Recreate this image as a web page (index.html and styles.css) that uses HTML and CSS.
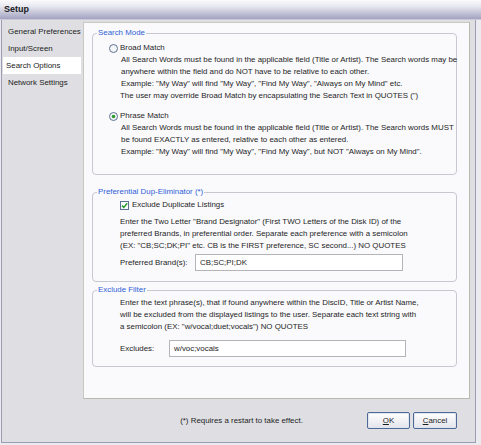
FILE: index.html
```html
<!DOCTYPE html>
<html>
<head>
<meta charset="utf-8">
<title>Setup</title>
<link rel="stylesheet" href="styles.css">
</head>
<body>
<div class="window">
  <div class="titlebar">Setup</div>
  <div class="main">
    <ul class="nav">
      <li>General Preferences</li>
      <li>Input/Screen</li>
      <li class="sel">Search Options</li>
      <li>Network Settings</li>
    </ul>
    <div class="panel">
      <fieldset class="grp g1">
        <legend>Search Mode</legend>
        <div class="body">
          <div class="opt">
            <svg class="radio" width="9" height="9" viewBox="0 0 9 9"><circle cx="4.5" cy="4.5" r="4" fill="#f4f6f9" stroke="#5d7190" stroke-width="1"/></svg>
            <span>Broad Match</span>
          </div>
          <div class="desc">
            <div>All Search Words must be found in the applicable field (Title or Artist). The Search words may be</div>
            <div>anywhere within the field and do NOT have to be relative to each other.</div>
            <div>Example: "My Way" will find "My Way", "Find My Way", "Always on My Mind" etc.</div>
            <div class="shift">The user may override Broad Match by encapsulating the Search Text in QUOTES (")</div>
          </div>
          <div class="opt opt2">
            <svg class="radio" width="9" height="9" viewBox="0 0 9 9"><circle cx="4.5" cy="4.5" r="4" fill="#f4f6f9" stroke="#5d7190" stroke-width="1"/><circle cx="4.5" cy="4.5" r="1.8" fill="#2f9b2f"/></svg>
            <span>Phrase Match</span>
          </div>
          <div class="desc">
            <div>All Search Words must be found in the applicable field (Title or Artist). The Search words MUST</div>
            <div>be found EXACTLY as entered, relative to each other as entered.</div>
            <div>Example: "My Way" will find "My Way", "Find My Way", but NOT "Always on My Mind".</div>
          </div>
        </div>
      </fieldset>

      <fieldset class="grp g2">
        <legend>Preferential Dup-Eliminator (*)</legend>
        <div class="body">
          <div class="opt chk">
            <svg class="box" width="9" height="9" viewBox="0 0 9 9"><rect x="0.5" y="0.5" width="8" height="8" fill="#fbfcfd" stroke="#5d7190"/><path d="M2 4.6 L3.8 6.4 L7.2 2.2" fill="none" stroke="#2a9a2a" stroke-width="1.5"/></svg>
            <span>Exclude Duplicate Listings</span>
          </div>
          <div class="lines">
            <div>Enter the Two Letter "Brand Designator" (First TWO Letters of the Disk ID) of the</div>
            <div>preferred Brands, in preferential order. Separate each preference with a semicolon</div>
            <div>(EX: "CB;SC;DK;PI" etc. CB is the FIRST preference, SC second...) NO QUOTES</div>
          </div>
          <div class="field brand">
            <span class="lbl">Preferred Brand(s):</span>
            <span class="input">CB;SC;PI;DK</span>
          </div>
        </div>
      </fieldset>

      <fieldset class="grp g3">
        <legend>Exclude Filter</legend>
        <div class="body">
          <div class="lines">
            <div>Enter the text phrase(s), that if found anywhere within the DiscID, Title or Artist Name,</div>
            <div>will be excluded from the displayed listings to the user. Separate each text string with</div>
            <div>a semicolon (EX: "w/vocal;duet;vocals") NO QUOTES</div>
          </div>
          <div class="field excl">
            <span class="lbl">Excludes:</span>
            <span class="input">w/voc;vocals</span>
          </div>
        </div>
      </fieldset>
    </div>
  </div>
  <div class="footer">
    <span class="note">(*) Requires a restart to take effect.</span>
    <div class="btns">
      <button class="btn ok"><u>O</u>K</button>
      <button class="btn cancel"><u>C</u>ancel</button>
    </div>
  </div>
</div>
</body>
</html>
```

FILE: styles.css
```css
* { box-sizing: border-box; }

html, body {
  margin: 0;
  padding: 0;
}

body {
  background: #ebebef;
  font-family: "Liberation Sans", Arial, sans-serif;
  font-size: 7.9px;
  color: #1e1e1e;
  width: 481px;
  height: 445px;
  overflow: hidden;
}

.window {
  width: 475px;
  height: 443px;
  margin-left: 1px;
  background: #dfdfe3;
  border-left: 1px solid #9c9cb4;
  border-right: 1px solid #9c9cb4;
  border-bottom: 1px solid #9c9cb4;
  display: flex;
  flex-direction: column;
}

.titlebar {
  height: 20px;
  margin: 0 -6px 0 -2px;
  padding-left: 4px;
  line-height: 19px;
  font-size: 9px;
  font-weight: bold;
  color: #1a1a22;
  background: linear-gradient(to bottom, #fbfbfd 0%, #e6e6ee 35%, #b7b7cf 80%, #a3a3c1 100%);
  border-bottom: 1px solid #c9c9d8;
}

.main {
  display: flex;
  padding-top: 2px;
}

.nav {
  list-style: none;
  margin: 1px 0 0 1px;
  padding: 0;
  width: 78px;
}

.nav li {
  height: 17px;
  line-height: 17px;
  padding-left: 5px;
  white-space: nowrap;
  color: #222;
}

.nav li.sel {
  background: #ffffff;
  padding-left: 3px;
}

.panel {
  margin-left: 2px;
  width: 387px;
  height: 377px;
  background: #fafafc;
  border: 1px solid #c9c9c4;
  border-right-color: #b9b9ad;
  border-bottom-color: #b9b9ad;
  padding: 5px 12px 0 8px;
}

.grp {
  margin: 0;
  padding: 0 0 0 4px;
  border: 1px solid #c8c8d0;
  border-radius: 4px;
  min-width: 0;
}

.grp legend {
  padding: 0 1px;
  line-height: 10px;
  color: #2f5fd6;
}

.body {
  line-height: 12px;
}

.opt {
  display: flex;
  align-items: center;
  height: 12px;
}

.radio {
  margin-right: 2px;
  flex: none;
}

.box {
  margin-right: 3px;
  flex: none;
}

.desc {
  padding-left: 12px;
  white-space: nowrap;
}

.desc .shift {
  margin-left: -1px;
}

.g1 .body {
  padding: 4px 0 16px 12px;
}

.opt2 {
  margin-top: 8px;
}

.g2 {
  margin-top: 12px;
}

.g2 .body {
  padding: 2px 0 10px 23px;
}

.lines {
  white-space: nowrap;
}

.g2 .lines {
  margin-top: 5px;
}

.field {
  display: flex;
  align-items: center;
}

.lbl {
  flex: none;
}

.input {
  display: block;
  height: 17px;
  line-height: 15px;
  background: #ffffff;
  border: 1px solid #b4b4b8;
  padding-left: 4px;
}

.brand {
  margin-top: 2px;
}

.brand .lbl { width: 75px; }
.brand .input { width: 208px; }

.g3 {
  margin-top: 3px;
}

.g3 .body {
  padding: 2px 0 9px 23px;
}

.excl {
  margin-top: 7px;
}

.excl .lbl { width: 49px; }
.excl .input { width: 237px; padding-left: 4px; }

.footer {
  display: grid;
  grid-template-columns: 1fr auto 1fr;
  align-items: center;
  padding: 13px 18px 0 24px;
}

.note {
  grid-column: 2;
  white-space: nowrap;
}

.btns {
  grid-column: 3;
  justify-self: end;
  display: flex;
  gap: 3px;
}

.btn {
  height: 17px;
  padding: 0;
  font-family: "Liberation Sans", Arial, sans-serif;
  font-size: 7.9px;
  color: #1e1e1e;
  background: linear-gradient(to bottom, #ffffff 0%, #f2f2f6 50%, #e2e2ea 100%);
  border: 1px solid #4e6a94;
  border-radius: 2px;
  box-shadow: inset 0 0 0 1px #dfe6f2;
}

.btn.ok { width: 43px; }
.btn.cancel { width: 44px; }
```
